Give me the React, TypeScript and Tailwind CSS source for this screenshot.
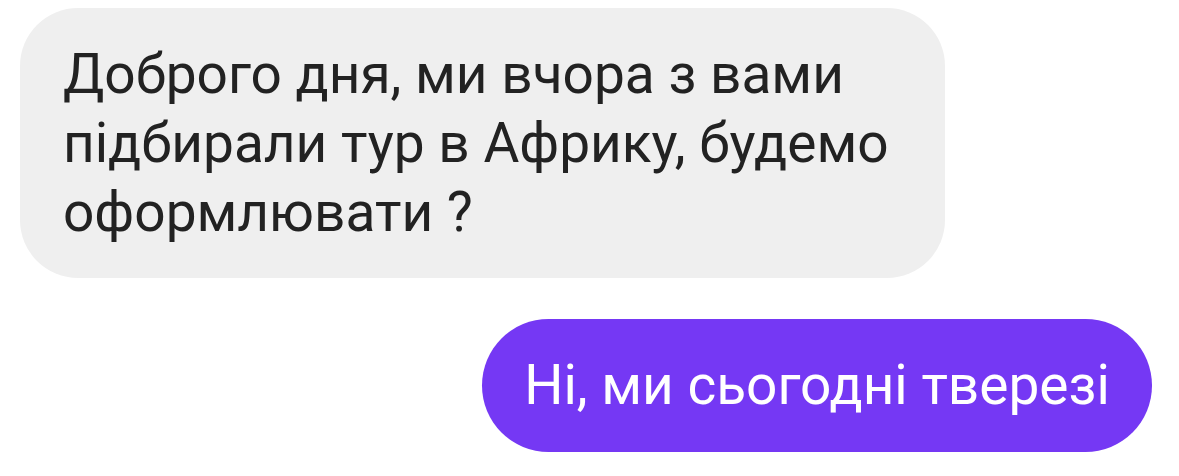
export default function App() {
  return (
    <div className="flex h-[476px] w-[1179px] flex-col bg-white px-5 pt-2 font-['Roboto',sans-serif]">
      {/* incoming message */}
      <div className="w-[925px] rounded-[58px] bg-[#efefef] pb-[31px] pl-[43px] pr-[40px] pt-[32px] text-[55px] leading-[69px] text-[#222222]">
        Доброго дня, ми вчора з вами
        <br />
        підбирали тур в Африку, будемо
        <br />
        оформлювати ?
      </div>

      {/* outgoing message */}
      <div className="mt-[41px] flex justify-end pr-[7px]">
        <div className="flex h-[133px] w-[670px] items-center justify-center rounded-full bg-[#7538f4] text-[55px] text-white">
          Ні, ми сьогодні тверезі
        </div>
      </div>
    </div>
  )
}
